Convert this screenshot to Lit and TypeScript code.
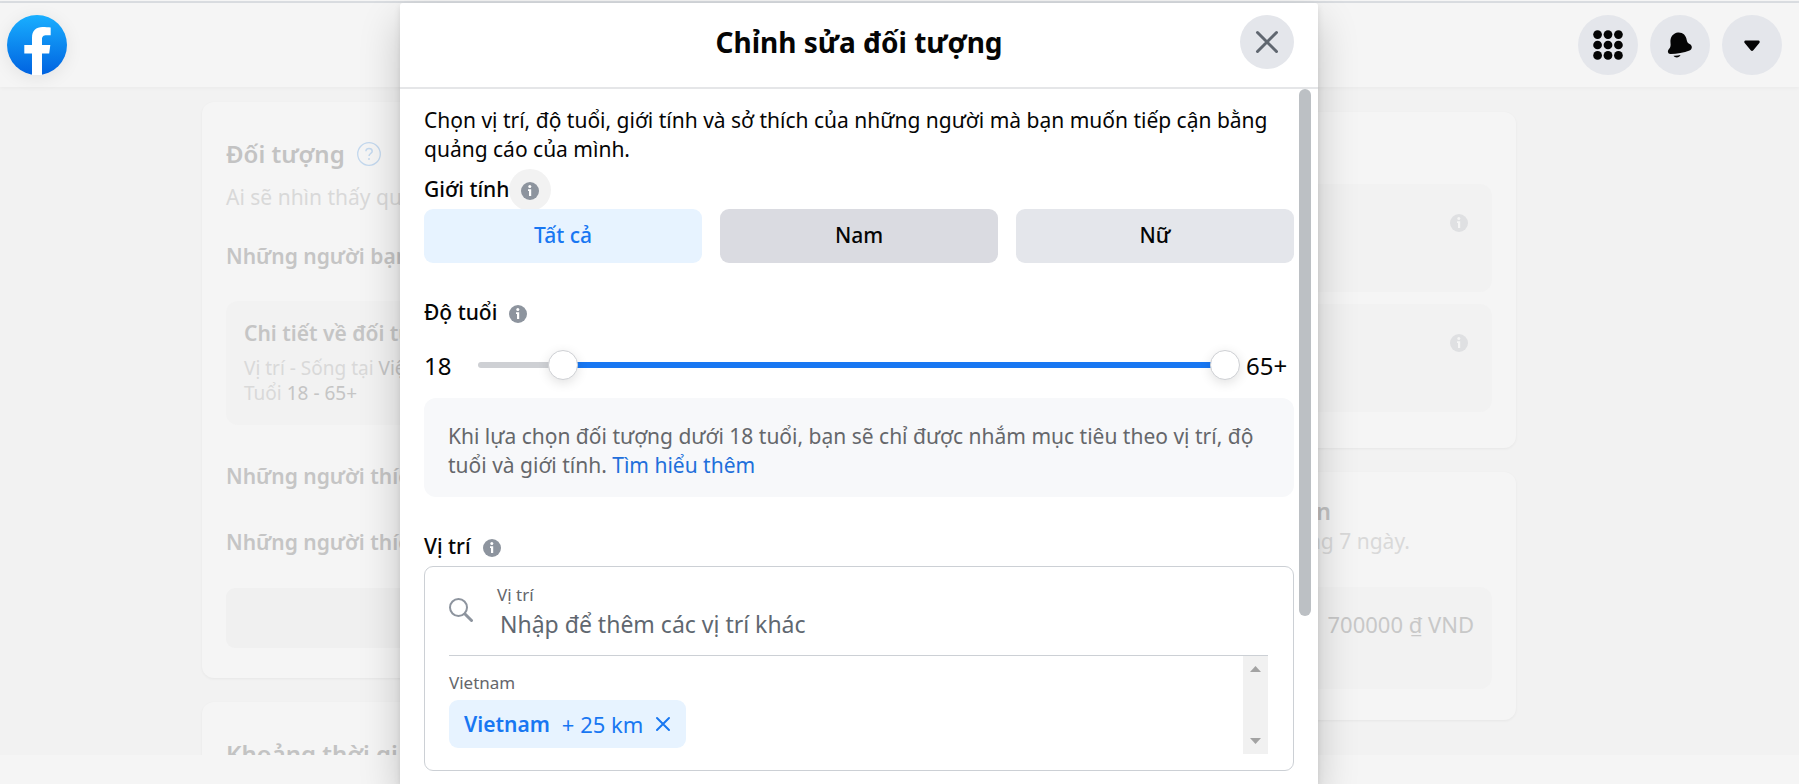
import { LitElement, html, css, svg } from "lit";
import { customElement, state, property } from "lit/decorators.js";
import { classMap } from "lit/directives/class-map.js";
import { styleMap } from "lit/directives/style-map.js";

const AGE_MIN = 12;
const AGE_MAX = 65;

const infoIcon = html`<svg class="info" viewBox="0 0 18 18" aria-hidden="true">
  <circle cx="9" cy="9" r="9" fill="currentColor"></circle>
  <circle cx="8.8" cy="4.6" r="1.5" fill="var(--info-mark, #fff)"></circle>
  <path d="M7 7.3h3.2v6.6H8V9H7z" fill="var(--info-mark, #fff)"></path>
</svg>`;

@customElement("age-range")
export class AgeRange extends LitElement {
  @property({ type: Number }) low = 18;
  @property({ type: Number }) high = 65;

  static styles = css`
    :host {
      display: grid;
      grid-template-columns: 39px 1fr 54px;
      grid-template-rows: 30px;
      align-items: center;
      font-size: 24px;
      line-height: 30px;
      color: #050505;
    }
    .min,
    .max {
      padding-top: 2px;
    }
    .max {
      padding-left: 6px;
    }
    .rail {
      display: grid;
      align-items: center;
    }
    .rail > * {
      grid-area: 1 / 1;
    }
    .track {
      display: flex;
      height: 6px;
      margin: 0 15px;
      border-radius: 3px;
      background: #ced0d4;
      overflow: hidden;
    }
    .fill {
      background: #1877f2;
    }
    input {
      appearance: none;
      width: 100%;
      height: 30px;
      margin: 0;
      background: transparent;
      pointer-events: none;
    }
    input::-webkit-slider-thumb {
      appearance: none;
      box-sizing: border-box;
      width: 30px;
      height: 30px;
      border: 1px solid #ced0d4;
      border-radius: 50%;
      background: #fff;
      box-shadow: 0 3px 12px rgba(0, 0, 0, 0.12);
      pointer-events: auto;
    }
  `;

  render() {
    const span = AGE_MAX - AGE_MIN;
    const start = ((this.low - AGE_MIN) / span) * 100;
    const width = ((this.high - this.low) / span) * 100;
    return html`
      <span class="min">${this.low}</span>
      <div class="rail">
        <div class="track">
          <div style=${styleMap({ width: `${start}%` })}></div>
          <div class="fill" style=${styleMap({ width: `${width}%` })}></div>
        </div>
        <input type="range" aria-label="Tuổi tối thiểu" min=${AGE_MIN} max=${AGE_MAX} .value=${String(this.low)}
          @input=${(e: Event) => (this.low = Math.min(+(e.target as HTMLInputElement).value, this.high))} />
        <input type="range" aria-label="Tuổi tối đa" min=${AGE_MIN} max=${AGE_MAX} .value=${String(this.high)}
          @input=${(e: Event) => (this.high = Math.max(+(e.target as HTMLInputElement).value, this.low))} />
      </div>
      <span class="max">${this.high}${this.high === AGE_MAX ? "+" : ""}</span>
    `;
  }
}

@customElement("audience-dialog")
export class AudienceDialog extends LitElement {
  @state() private gender = "Tất cả";

  static styles = css`
    :host {
      display: flex;
      flex-direction: column;
      box-sizing: border-box;
      background: #fff;
      border-radius: 3px 3px 0 0;
      box-shadow: 0 18px 42px rgba(0, 0, 0, 0.2), 0 3px 6px rgba(0, 0, 0, 0.1);
      color: #050505;
      font-size: 21px;
      line-height: 29px;
      overflow: hidden;
    }
    header {
      display: grid;
      grid-template-columns: 54px 1fr 54px;
      align-items: center;
      padding: 12px 24px 18px;
      border-bottom: 2px solid #e5e6e8;
    }
    h2 {
      grid-column: 2;
      margin: 0;
      text-align: center;
      font-size: 28px;
      line-height: 54px;
      font-weight: 700;
    }
    button {
      border: 0;
      padding: 0;
      font: inherit;
      cursor: pointer;
    }
    .close {
      display: grid;
      place-items: center;
      width: 54px;
      height: 54px;
      border-radius: 50%;
      background: #e4e6eb;
      color: #606770;
    }
    .close svg {
      width: 24px;
      height: 24px;
    }
    .scroll {
      display: flex;
      flex: 1;
      min-height: 0;
    }
    .content {
      flex: 1;
      min-width: 0;
      padding: 17px 5px 0 24px;
      overflow: hidden;
    }
    .bar {
      width: 12px;
      height: 527px;
      margin-right: 7px;
      border-radius: 6px;
      background: #bcc0c4;
    }
    p {
      margin: 0;
    }
    section {
      display: flex;
      flex-direction: column;
      margin-top: 35px;
    }
    .intro + section {
      margin-top: 11px;
    }
    .heading {
      display: flex;
      align-items: center;
      gap: 12px;
      height: 29px;
      margin-bottom: 5px;
    }
    h3 {
      margin: 0;
      font-size: 21px;
      line-height: 29px;
      font-weight: 500;
    }
    .info {
      display: block;
      width: 18px;
      height: 18px;
      margin-top: 2px;
      color: #8d949e;
    }
    .halo {
      display: grid;
      place-items: center;
      flex: none;
      width: 42px;
      height: 42px;
      margin-left: -12px;
      border-radius: 50%;
      background: #f2f2f2;
    }
    .choices {
      display: grid;
      grid-template-columns: repeat(3, 1fr);
      gap: 18px;
      isolation: isolate;
    }
    .choice {
      height: 54px;
      padding-bottom: 2px;
      border-radius: 9px;
      background: #e4e6eb;
      color: #050505;
      font-weight: 500;
    }
    .choice.hovered {
      background: #dadbe1;
    }
    .choice.selected {
      background: #e7f3ff;
      color: #1877f2;
    }
    age-range {
      margin: 18px 0;
    }
    .note {
      padding: 24px 24px 17px;
      border-radius: 12px;
      background: #f7f8fa;
      color: #65676b;
    }
    a {
      color: #216fdb;
      text-decoration: none;
    }
    .location {
      padding: 0 25px 16px 24px;
      border: 1px solid #ccd0d5;
      border-radius: 9px;
    }
    .search {
      display: flex;
      align-items: flex-start;
      gap: 24px;
      padding: 17px 0 13px;
      border-bottom: 1px solid #ccd0d5;
    }
    .search svg {
      width: 24px;
      height: 24px;
      margin-top: 14px;
      color: #8d949e;
    }
    .field {
      display: flex;
      flex: 1;
      flex-direction: column;
    }
    label,
    .country {
      font-size: 17px;
      line-height: 22px;
      color: #65676b;
    }
    input {
      height: 36px;
      box-sizing: border-box;
      border: 0;
      outline: 0;
      padding: 0 3px;
      background: none;
      font: inherit;
      font-size: 23px;
      color: #050505;
    }
    input::placeholder {
      color: #606770;
    }
    .picked {
      display: flex;
      justify-content: space-between;
    }
    .places {
      display: flex;
      flex-direction: column;
      align-items: flex-start;
      gap: 6px;
      padding: 16px 0 6px;
    }
    .chip {
      display: flex;
      align-items: center;
      gap: 12px;
      height: 48px;
      padding: 0 15px;
      border-radius: 9px;
      background: #e7f3ff;
      color: #1877f2;
      font-size: 22px;
    }
    .chip b {
      font-size: 21px;
      font-weight: 600;
    }
    .chip button {
      display: grid;
      background: none;
      color: inherit;
    }
    .chip svg {
      width: 16px;
      height: 16px;
    }
    .arrows {
      display: flex;
      flex-direction: column;
      justify-content: space-between;
      align-items: center;
      width: 25px;
      box-sizing: border-box;
      padding: 10px 0;
      background: #f1f1f1;
    }
    .arrows svg {
      width: 11px;
      height: 6px;
      color: #a3a3a3;
    }
  `;

  render() {
    return html`
      <header>
        <h2>Chỉnh sửa đối tượng</h2>
        <button class="close" aria-label="Đóng">
          <svg viewBox="0 0 24 24"><path d="M2.5 2.5l19 19M21.5 2.5l-19 19" stroke="currentColor" stroke-width="3" stroke-linecap="round"></path></svg>
        </button>
      </header>
      <div class="scroll">
        <div class="content">
          <p class="intro">
            Chọn vị trí, độ tuổi, giới tính và sở thích của những người mà bạn muốn tiếp cận bằng quảng cáo của mình.
          </p>
          <section>
            <div class="heading"><h3>Giới tính</h3><span class="halo">${infoIcon}</span></div>
            <div class="choices">
              ${["Tất cả", "Nam", "Nữ"].map(
                (name) => html`<button
                  class=${classMap({ choice: true, selected: name === this.gender, hovered: name === "Nam" })}
                  aria-pressed=${name === this.gender}
                  @click=${() => (this.gender = name)}
                >${name}</button>`
              )}
            </div>
          </section>
          <section>
            <div class="heading"><h3>Độ tuổi</h3>${infoIcon}</div>
            <age-range low="18" high="65"></age-range>
            <p class="note">
              Khi lựa chọn đối tượng dưới 18 tuổi, bạn sẽ chỉ được nhắm mục tiêu theo vị trí, độ tuổi và giới tính.
              <a href="#">Tìm hiểu thêm</a>
            </p>
          </section>
          <section>
            <div class="heading"><h3>Vị trí</h3>${infoIcon}</div>
            <div class="location">
              <div class="search">
                <svg viewBox="0 0 24 24" fill="none" stroke="currentColor">
                  <circle cx="9.5" cy="9.5" r="8.5" stroke-width="2"></circle>
                  <path d="M16 16l6.5 6.5" stroke-width="3" stroke-linecap="round"></path>
                </svg>
                <div class="field">
                  <label for="place">Vị trí</label>
                  <input id="place" type="text" placeholder="Nhập để thêm các vị trí khác" />
                </div>
              </div>
              <div class="picked">
                <div class="places">
                  <span class="country">Vietnam</span>
                  <span class="chip">
                    <b>Vietnam</b><span>+ 25 km</span>
                    <button aria-label="Xóa Vietnam">
                      <svg viewBox="0 0 16 16"><path d="M2 2l12 12M14 2L2 14" stroke="currentColor" stroke-width="2" stroke-linecap="round"></path></svg>
                    </button>
                  </span>
                </div>
                <div class="arrows" aria-hidden="true">
                  <svg viewBox="0 0 11 6"><path d="M0 6L5.5 0 11 6z" fill="currentColor"></path></svg>
                  <svg viewBox="0 0 11 6"><path d="M0 0h11L5.5 6z" fill="currentColor"></path></svg>
                </div>
              </div>
            </div>
          </section>
        </div>
        <div class="bar"></div>
      </div>
    `;
  }
}

const dots = [4, 14.25, 24.5];

@customElement("app-root")
export class AppRoot extends LitElement {
  static styles = css`
    :host {
      display: grid;
      grid-template-rows: 3px 1fr;
      height: 100vh;
      overflow: hidden;
      background: #f2f2f2;
      font-family: "Noto Sans", "Open Sans", sans-serif;
      font-size: 21px;
      line-height: 29px;
    }
    .edge {
      box-sizing: border-box;
      border-top: 1px solid #f5f5f5;
      background: #dadde1;
    }
    .stage {
      display: grid;
      min-height: 0;
    }
    .stage > * {
      grid-area: 1 / 1;
      min-height: 0;
    }
    .page {
      display: flex;
      flex-direction: column;
    }
    .top {
      display: flex;
      justify-content: space-between;
      padding: 12px 17px 12px 7px;
      background: #f5f5f5;
      box-shadow: 0 1px 4px rgba(0, 0, 0, 0.04);
    }
    .logo {
      display: block;
      height: 60px;
      border-radius: 50%;
      box-shadow: 0 3px 18px rgba(0, 0, 0, 0.08);
    }
    .logo svg {
      display: block;
      width: 60px;
      height: 60px;
    }
    .tools {
      display: flex;
      gap: 12px;
    }
    .tools button {
      display: grid;
      place-items: center;
      width: 60px;
      height: 60px;
      padding: 0;
      border: 0;
      border-radius: 50%;
      background: #e4e6eb;
      color: #050505;
    }
    .tools svg {
      width: 30px;
      height: 30px;
    }
    .columns {
      flex: 1;
      min-height: 0;
      display: grid;
      grid-template-columns: 755px 535px;
      align-items: start;
      justify-content: center;
      gap: 24px;
      padding: 15px 81px 0 0;
      overflow: hidden;
    }
    .column {
      display: flex;
      flex-direction: column;
      gap: 24px;
    }
    .column.side {
      padding-top: 10px;
    }
    .card {
      padding: 37px 24px 30px;
      border-radius: 12px;
      background: #f5f5f5;
      box-shadow: 0 1px 3px rgba(0, 0, 0, 0.05);
      color: #d9d9d9;
    }
    .side .card {
      padding: 24px 24px 36px;
    }
    .side .card.payment {
      padding-bottom: 31px;
    }
    h2 {
      display: flex;
      align-items: center;
      gap: 12px;
      margin: 0;
      font-size: 24px;
      line-height: 30px;
      font-weight: 600;
      color: #c3c3c3;
    }
    .side h2 {
      font-size: 23px;
    }
    h2 svg {
      width: 24px;
      height: 24px;
      color: #c3d8ee;
    }
    h3 {
      margin: 0;
      font-size: 21px;
      line-height: 29px;
      font-weight: 600;
      color: #c5c5c5;
    }
    p {
      margin: 0;
    }
    .lead {
      margin: 14px 0 30px;
    }
    .details {
      margin: 30px 0 37px;
      padding: 18px 18px 19px;
      border-radius: 12px;
      background: #f2f2f2;
    }
    .details p {
      font-size: 19px;
      line-height: 25px;
    }
    .details p:first-of-type {
      margin-top: 8px;
    }
    .details b {
      font-weight: 400;
      color: #c5c5c5;
    }
    .gap {
      margin-top: 37px;
    }
    .create {
      display: block;
      width: 100%;
      height: 60px;
      margin-top: 31px;
      border: 0;
      border-radius: 9px;
      background: #f0f0f0;
    }
    .metric {
      box-sizing: border-box;
      display: flex;
      justify-content: flex-end;
      height: 108px;
      padding: 30px 24px;
      border-radius: 12px;
      background: #f2f2f2;
      --info-mark: #f5f5f5;
    }
    .metric .info {
      width: 18px;
      height: 18px;
      color: #dfe0e2;
    }
    .metric + .metric {
      margin-top: 12px;
    }
    h2 + .metric {
      margin-top: 18px;
    }
    .payment p {
      margin-top: 1px;
    }
    .total {
      display: flex;
      justify-content: flex-end;
      height: 102px;
      box-sizing: border-box;
      margin-top: 31px;
      padding: 23px 18px;
      border-radius: 12px;
      background: #f2f2f2;
      color: #c8c8c8;
      font-size: 22px;
    }
    footer {
      height: 29px;
      background: #f5f5f5;
    }
    .overlay {
      display: grid;
      justify-content: center;
      grid-template-columns: minmax(0, 918px);
      padding-right: 81px;
    }
    audience-dialog {
      min-height: 0;
    }
  `;

  render() {
    return html`
      <div class="edge"></div>
      <div class="stage">
        <div class="page">
          <div class="top">
            <a class="logo" href="#" aria-label="Facebook">
              <svg viewBox="0 0 60 60">
                <defs>
                  <linearGradient id="blue" x1="0" y1="0" x2="0" y2="1">
                    <stop offset="0" stop-color="#19afff"></stop>
                    <stop offset="1" stop-color="#0062e0"></stop>
                  </linearGradient>
                </defs>
                <circle cx="30" cy="30" r="30" fill="url(#blue)"></circle>
                <path d="M25 60V38.5H17.300V30H25V23C25 15.5 29 12 35.5 12C38.5 12 41.5 12.2 43.7 12.600V20.300H39.700C36.200 20.300 35 21.800 35 24.300V30H43.300L42.200 38.500H35V60Z" fill="#fff"></path>
              </svg>
            </a>
            <div class="tools">
              <button aria-label="Menu">
                <svg viewBox="-0.5 -0.5 29.5 29.5">
                  ${dots.map((y) => dots.map((x) => svg`<circle cx=${x} cy=${y} r="4.3" fill="currentColor"></circle>`))}
                </svg>
              </button>
              <button aria-label="Thông báo">
                <svg viewBox="0 0 30 30">
                  <path d="M5.500 13C4.800 7 8.500 3 13 2.600C18 2.300 21 5.500 21.700 10C22.200 12.500 23 13.300 25 14.300C27.500 15.700 27.500 19.300 24.500 20.500C19 22.800 12 24 5.500 24C2.500 24 2.300 20.500 4 19C5.600 17.300 5.800 15.500 5.500 13Z" fill="currentColor"></path>
                  <path d="M8.500 25.800C11 26 13.500 25.600 15.500 25C14.500 28 10 28.200 8.500 25.800Z" fill="currentColor"></path>
                </svg>
              </button>
              <button aria-label="Tài khoản">
                <svg viewBox="0 0 30 30">
                  <path d="M8.600 10.500H21.400C22.700 10.500 23.200 12 22.300 13L16.300 20.200C15.500 21.100 14.500 21.100 13.700 20.200L7.700 13C6.800 12 7.300 10.500 8.600 10.500Z" fill="currentColor"></path>
                </svg>
              </button>
            </div>
          </div>
          <div class="columns">
            <div class="column">
              <div class="card">
                <h2>
                  Đối tượng
                  <svg viewBox="0 0 24 24" fill="none" stroke="currentColor">
                    <circle cx="12" cy="12" r="11.3" stroke-width="1.3"></circle>
                    <path d="M8.9 9.3C8.9 7.4 10.2 6.5 12 6.5S15.2 7.6 15.2 9.2C15.2 11.4 12 11.6 12 14" stroke-width="1.5"></path>
                    <circle cx="12" cy="17" r="0.6"></circle>
                  </svg>
                </h2>
                <p class="lead">Ai sẽ nhìn thấy quảng</p>
                <h3>Những người bạn</h3>
                <div class="details">
                  <h3>Chi tiết về đối tượng</h3>
                  <p>Vị trí - Sống tại <b>Việt</b></p>
                  <p>Tuổi <b>18 - 65+</b></p>
                </div>
                <h3>Những người thích</h3>
                <h3 class="gap">Những người thích</h3>
                <button class="create" aria-label="Tạo mới"></button>
              </div>
              <div class="card">
                <h2>Khoảng thời gian</h2>
              </div>
            </div>
            <div class="column side">
              <div class="card">
                <h2>Kết quả ước tính trong tuần</h2>
                <div class="metric">${infoIcon}</div>
                <div class="metric">${infoIcon}</div>
              </div>
              <div class="card payment">
                <h2>Tóm tắt thông tin thanh toán</h2>
                <p>Quảng cáo của bạn sẽ chạy trong 7 ngày.</p>
                <div class="total">700000 ₫ VND</div>
              </div>
            </div>
          </div>
          <footer></footer>
        </div>
        <div class="overlay"><audience-dialog></audience-dialog></div>
      </div>
    `;
  }
}
